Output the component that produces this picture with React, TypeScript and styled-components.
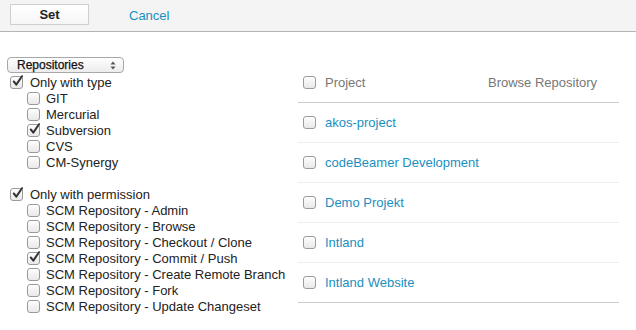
import { VFC } from 'react';
import styled, { createGlobalStyle } from 'styled-components';

const GlobalStyle = createGlobalStyle`
  body {
    margin: 0;
    background: #fff;
    font-family: 'Liberation Sans', Arial, sans-serif;
    font-size: 13px;
    color: #222;
  }
`;

const typeOptions = [
  { label: 'GIT', checked: false },
  { label: 'Mercurial', checked: false },
  { label: 'Subversion', checked: true },
  { label: 'CVS', checked: false },
  { label: 'CM-Synergy', checked: false },
];

const permissionOptions = [
  { label: 'SCM Repository - Admin', checked: false },
  { label: 'SCM Repository - Browse', checked: false },
  { label: 'SCM Repository - Checkout / Clone', checked: false },
  { label: 'SCM Repository - Commit / Push', checked: true },
  { label: 'SCM Repository - Create Remote Branch', checked: false },
  { label: 'SCM Repository - Fork', checked: false },
  { label: 'SCM Repository - Update Changeset', checked: false },
];

const projects = ['akos-project', 'codeBeamer Development', 'Demo Projekt', 'Intland', 'Intland Website'];

const Check: VFC<{ checked?: boolean }> = ({ checked }) => (
  <Box>
    {checked && (
      <svg width="13" height="13" viewBox="0 0 13 13">
        <path d="M2.8 6.5 L5.3 9.6 L11 1.2" fill="none" stroke="#333" strokeWidth="2" strokeLinecap="round" strokeLinejoin="round" />
      </svg>
    )}
  </Box>
);

const Option: VFC<{ label: string; checked?: boolean; nested?: boolean }> = ({ label, checked, nested }) => (
  <OptionRow nested={nested}>
    <Check checked={checked} />
    <span>{label}</span>
  </OptionRow>
);

export default function App() {
  return (
    <>
      <GlobalStyle />
      <Toolbar>
        <SetButton>Set</SetButton>
        <Link>Cancel</Link>
      </Toolbar>
      <Main>
        <Filters>
          <Select>
            <span>Repositories</span>
            <svg width="6" height="9" viewBox="0 0 6 9">
              <path d="M0.5 3.5 L3 0.5 L5.5 3.5 Z M0.5 5.5 L3 8.5 L5.5 5.5 Z" fill="#555" />
            </svg>
          </Select>
          <Option label="Only with type" checked />
          {typeOptions.map((o) => (
            <Option key={o.label} label={o.label} checked={o.checked} nested />
          ))}
          <Spacer />
          <Option label="Only with permission" checked />
          {permissionOptions.map((o) => (
            <Option key={o.label} label={o.label} checked={o.checked} nested />
          ))}
        </Filters>
        <Table>
          <HeaderRow>
            <Check />
            <ProjectCell>Project</ProjectCell>
            <span>Browse Repository</span>
          </HeaderRow>
          {projects.map((p, i) => (
            <ProjectRow key={p} last={i === projects.length - 1}>
              <Check />
              <ProjectCell>
                <Link>{p}</Link>
              </ProjectCell>
            </ProjectRow>
          ))}
        </Table>
      </Main>
    </>
  );
}

const Toolbar = styled.div`
  display: flex;
  align-items: center;
  gap: 40px;
  height: 32px;
  padding-left: 10px;
  box-sizing: border-box;
  background: #f4f4f4;
  border-bottom: 1px solid #b4b4b4;
`;

const SetButton = styled.div`
  width: 77px;
  height: 19px;
  margin-top: -2px;
  display: flex;
  align-items: center;
  justify-content: center;
  font-weight: bold;
  color: #222;
  background: linear-gradient(#ffffff, #f6f6f6);
  border: 1px solid #cfcfcf;
`;

const Link = styled.span`
  color: #1a8fc1;
  cursor: pointer;
`;

const Main = styled.div`
  display: flex;
`;

const Filters = styled.div`
  width: 291px;
  padding: 25px 0 0 7px;
  display: flex;
  flex-direction: column;
`;

const Select = styled.div`
  width: 117px;
  height: 16px;
  margin-bottom: 1px;
  padding: 0 7px 0 9px;
  box-sizing: border-box;
  display: flex;
  align-items: center;
  justify-content: space-between;
  font-size: 12px;
  color: #111;
  border: 1px solid #a8a8a8;
  border-radius: 4px;
  background: linear-gradient(#ffffff, #ececec);
  span {
    -webkit-text-stroke: 0.25px #111;
  }
`;

const OptionRow = styled.label<{ nested?: boolean }>`
  display: flex;
  align-items: center;
  gap: ${(p) => (p.nested ? 6 : 7)}px;
  height: 16px;
  padding-left: ${(p) => (p.nested ? 20 : 3)}px;
  white-space: nowrap;
  color: #222;
`;

const Spacer = styled.div`
  height: 16px;
`;

const Box = styled.span`
  position: relative;
  flex: none;
  width: 11px;
  height: 11px;
  border: 1px solid #9a9a9a;
  border-radius: 3px;
  background: linear-gradient(#fdfdfd, #e9e9e9);
  box-shadow: inset 0 1px 0 #fff;
  svg {
    position: absolute;
    left: 0;
    top: -2px;
  }
`;

const Table = styled.div`
  width: 321px;
  margin-top: 30px;
  display: flex;
  flex-direction: column;
`;

const HeaderRow = styled.div`
  display: flex;
  align-items: center;
  height: 40px;
  padding-left: 5px;
  color: #777;
  border-bottom: 1px solid #cccccc;
`;

const ProjectCell = styled.span`
  width: 163px;
  margin-left: 9px;
`;

const ProjectRow = styled.div<{ last?: boolean }>`
  display: flex;
  align-items: center;
  height: 39px;
  padding-left: 5px;
  border-bottom: 1px solid ${(p) => (p.last ? '#cccccc' : '#eeeeee')};
`;
